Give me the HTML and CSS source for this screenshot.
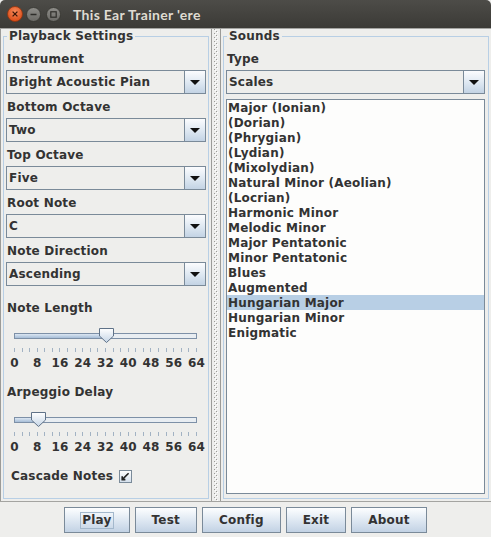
FILE: index.html
```html
<!DOCTYPE html>
<html>
<head>
<meta charset="utf-8">
<title>This Ear Trainer 'ere</title>
<link rel="stylesheet" href="styles.css">
</head>
<body>
<div class="titlebar">
  <svg class="wbtn close" width="16" height="16" viewBox="0 0 16 16">
    <defs><radialGradient id="cg" cx="50%" cy="35%" r="65%"><stop offset="0" stop-color="#f6895a"/><stop offset="1" stop-color="#dc4b16"/></radialGradient></defs>
    <circle cx="8" cy="8" r="7.5" fill="url(#cg)" stroke="#8e3510" stroke-width="0.8"/>
    <path d="M5.6 5.6 L10.4 10.4 M10.4 5.6 L5.6 10.4" stroke="#3b1608" stroke-width="1.3"/>
  </svg>
  <svg class="wbtn min" width="15" height="15" viewBox="0 0 15 15">
    <defs><linearGradient id="gg" x1="0" y1="0" x2="0" y2="1"><stop offset="0" stop-color="#8f8e8a"/><stop offset="1" stop-color="#6a6965"/></linearGradient></defs>
    <circle cx="7.5" cy="7.5" r="7" fill="url(#gg)" stroke="#34332f" stroke-width="0.8"/>
    <path d="M4.5 7.5 H10.5" stroke="#2e2d2a" stroke-width="1.5"/>
  </svg>
  <svg class="wbtn max" width="15" height="15" viewBox="0 0 15 15">
    <circle cx="7.5" cy="7.5" r="7" fill="url(#gg)" stroke="#34332f" stroke-width="0.8"/>
    <rect x="4.8" y="4.8" width="5.4" height="5.4" fill="none" stroke="#2e2d2a" stroke-width="1.2"/>
  </svg>
  <div class="title">This Ear Trainer 'ere</div>
</div>

<div class="split">
  <div class="pane left">
    <fieldset class="group">
      <legend>Playback Settings</legend>
      <div class="field-label">Instrument</div>
      <div class="combo"><span class="combo-text">Bright Acoustic Pian</span><span class="combo-btn"><svg width="10" height="5" viewBox="0 0 10 5"><polygon points="0,0 10,0 5,5" fill="#111"/></svg></span></div>
      <div class="field-label">Bottom Octave</div>
      <div class="combo"><span class="combo-text">Two</span><span class="combo-btn"><svg width="10" height="5" viewBox="0 0 10 5"><polygon points="0,0 10,0 5,5" fill="#111"/></svg></span></div>
      <div class="field-label">Top Octave</div>
      <div class="combo"><span class="combo-text">Five</span><span class="combo-btn"><svg width="10" height="5" viewBox="0 0 10 5"><polygon points="0,0 10,0 5,5" fill="#111"/></svg></span></div>
      <div class="field-label">Root Note</div>
      <div class="combo"><span class="combo-text">C</span><span class="combo-btn"><svg width="10" height="5" viewBox="0 0 10 5"><polygon points="0,0 10,0 5,5" fill="#111"/></svg></span></div>
      <div class="field-label">Note Direction</div>
      <div class="combo"><span class="combo-text">Ascending</span><span class="combo-btn"><svg width="10" height="5" viewBox="0 0 10 5"><polygon points="0,0 10,0 5,5" fill="#111"/></svg></span></div>

      <div class="field-label slider-label">Note Length</div>
      <div class="slider">
        <div class="track">
          <div class="fill" style="width:50%"></div>
          <svg class="thumb" style="left:50%" width="15" height="15" viewBox="0 0 15 15">
            <defs><linearGradient id="tg" x1="0" y1="0" x2="0" y2="1"><stop offset="0" stop-color="#ffffff"/><stop offset="1" stop-color="#c5d5e6"/></linearGradient></defs>
            <path d="M0.5 0.5 H14.5 V8 L7.5 14.5 L0.5 8 Z" fill="url(#tg)" stroke="#5f7288"/>
          </svg>
        </div>
        <div class="ticks"><i></i><i></i><i></i><i></i><i></i><i></i><i></i><i></i><i></i><i></i><i></i><i></i><i></i><i></i><i></i><i></i><i></i><i></i><i></i><i></i><i></i><i></i><i></i><i></i><i></i></div>
        <div class="nums"><span>0</span><span>8</span><span>16</span><span>24</span><span>32</span><span>40</span><span>48</span><span>56</span><span>64</span></div>
      </div>

      <div class="field-label slider-label">Arpeggio Delay</div>
      <div class="slider">
        <div class="track">
          <div class="fill" style="width:12.5%"></div>
          <svg class="thumb" style="left:12.5%" width="15" height="15" viewBox="0 0 15 15">
            <path d="M0.5 0.5 H14.5 V8 L7.5 14.5 L0.5 8 Z" fill="url(#tg)" stroke="#5f7288"/>
          </svg>
        </div>
        <div class="ticks"><i></i><i></i><i></i><i></i><i></i><i></i><i></i><i></i><i></i><i></i><i></i><i></i><i></i><i></i><i></i><i></i><i></i><i></i><i></i><i></i><i></i><i></i><i></i><i></i><i></i></div>
        <div class="nums"><span>0</span><span>8</span><span>16</span><span>24</span><span>32</span><span>40</span><span>48</span><span>56</span><span>64</span></div>
      </div>

      <div class="check-row">
        <span>Cascade Notes</span>
        <svg class="checkbox" width="13" height="13" viewBox="0 0 13 13">
          <defs><linearGradient id="kg" x1="0" y1="0" x2="0" y2="1"><stop offset="0" stop-color="#ffffff"/><stop offset="1" stop-color="#d3dfec"/></linearGradient></defs>
          <rect x="0.5" y="0.5" width="12" height="12" fill="url(#kg)" stroke="#7a8a99"/>
          <path d="M3.2 6.2 L3.2 9.6 L6.4 9.6 M3.4 9.4 L9.6 3.3" stroke="#222" stroke-width="1.6" fill="none"/>
        </svg>
      </div>
    </fieldset>
  </div>

  <div class="divider">
    <svg width="4" height="472">
      <defs><pattern id="bump" width="4" height="4" patternUnits="userSpaceOnUse">
        <rect x="0" y="0" width="1" height="1" fill="#9a9a96"/>
        <rect x="2" y="2" width="1" height="1" fill="#9a9a96"/>
        <rect x="1" y="1" width="1" height="1" fill="#ffffff"/>
        <rect x="3" y="3" width="1" height="1" fill="#ffffff"/>
      </pattern></defs>
      <rect width="4" height="472" fill="url(#bump)"/>
    </svg>
  </div>

  <div class="pane right">
    <fieldset class="group sounds">
      <legend>Sounds</legend>
      <div class="field-label">Type</div>
      <div class="combo"><span class="combo-text">Scales</span><span class="combo-btn"><svg width="10" height="5" viewBox="0 0 10 5"><polygon points="0,0 10,0 5,5" fill="#111"/></svg></span></div>
      <ul class="list">
        <li>Major (Ionian)</li>
        <li>(Dorian)</li>
        <li>(Phrygian)</li>
        <li>(Lydian)</li>
        <li>(Mixolydian)</li>
        <li>Natural Minor (Aeolian)</li>
        <li>(Locrian)</li>
        <li>Harmonic Minor</li>
        <li>Melodic Minor</li>
        <li>Major Pentatonic</li>
        <li>Minor Pentatonic</li>
        <li>Blues</li>
        <li>Augmented</li>
        <li class="selected">Hungarian Major</li>
        <li>Hungarian Minor</li>
        <li>Enigmatic</li>
      </ul>
    </fieldset>
  </div>
</div>

<div class="buttons">
  <button class="btn"><span class="focus">Play</span></button>
  <button class="btn">Test</button>
  <button class="btn">Config</button>
  <button class="btn">Exit</button>
  <button class="btn">About</button>
</div>
</body>
</html>
```

FILE: styles.css
```css
html, body {
  margin: 0;
  padding: 0;
}

body {
  width: 491px;
  height: 537px;
  overflow: hidden;
  background: #eeeeec;
  font: bold 12px "DejaVu Sans", sans-serif;
  letter-spacing: 0.2px;
  color: #333333;
}

/* ---- title bar ---- */
.titlebar {
  height: 28px;
  display: flex;
  align-items: center;
  background: linear-gradient(#4d4c48, #3b3a36);
  border-radius: 5px 5px 0 0;
}

.wbtn {
  display: block;
  flex: none;
}

.wbtn.close {
  margin-left: 7px;
}

.wbtn.min {
  margin-left: 3px;
}

.wbtn.max {
  margin-left: 5px;
}

.title {
  margin-left: 12px;
  font: bold 14px "Lato", "DejaVu Sans", sans-serif;
  letter-spacing: 0.3px;
  color: #dfdbd2;
}

/* ---- split pane ---- */
.split {
  display: flex;
  height: 472px;
  border-top: 1px solid #a4a4a1;
  border-bottom: 1px solid #a4a4a1;
}

.pane {
  box-sizing: border-box;
  display: flex;
  flex-direction: column;
  padding: 0 2px 2px 2px;
}

.pane.left {
  width: 212px;
  border-left: 1px solid #9b9b98;
  border-right: 1px solid #9b9b98;
}

.pane.right {
  flex: 1;
  border-left: 1px solid #9b9b98;
}

.divider {
  width: 8px;
  flex: none;
  padding-left: 2px;
  box-sizing: border-box;
}

.divider svg {
  display: block;
}

/* ---- titled group ---- */
.group {
  flex: 1;
  min-width: 0;
  margin: 0;
  border: 1px solid #b8cfe5;
  padding: 2px 2px 0 2px;
}

.group.sounds {
  padding-right: 3px;
}

.group legend {
  margin-left: 1px;
  padding: 0 2px;
  line-height: 15px;
  font-size: 12px;
  color: #333333;
}

.field-label {
  height: 24px;
  line-height: 26px;
  padding-left: 1px;
  white-space: nowrap;
}

/* ---- combo box ---- */
.combo {
  display: flex;
  height: 24px;
  box-sizing: border-box;
  border: 1px solid #7a8a99;
  background: #eeeeec;
}

.combo-text {
  flex: 1;
  min-width: 0;
  overflow: hidden;
  white-space: nowrap;
  padding-left: 2px;
  line-height: 23px;
}

.combo-btn {
  width: 20px;
  flex: none;
  display: flex;
  align-items: center;
  justify-content: center;
  border-left: 1px solid #7a8a99;
  background: linear-gradient(#fbfcfe, #dde7f1 55%, #c3d3e4);
}

.combo-btn svg {
  display: block;
}

/* ---- slider ---- */
.slider-label {
  margin-top: 9px;
}

.slider {
  padding: 0 9px 0 8px;
  margin-bottom: 3px;
}

.track {
  position: relative;
  height: 6px;
  box-sizing: border-box;
  margin-top: 14px;
  border: 1px solid #7d90a7;
  background: #e8edf2;
}

.track .fill {
  height: 100%;
  background: linear-gradient(#dbe6f2, #a6bdd7);
}

.thumb {
  position: absolute;
  top: -6px;
  margin-left: -7px;
  display: block;
}

.ticks {
  display: flex;
  justify-content: space-between;
  height: 4px;
  margin-top: 9px;
}

.ticks i {
  width: 1px;
  background: #a2b2c3;
}

.nums {
  display: flex;
  justify-content: space-between;
  height: 14px;
  line-height: 14px;
  margin-top: 4px;
}

.nums span {
  width: 1px;
  display: flex;
  justify-content: center;
  white-space: nowrap;
}

/* ---- checkbox ---- */
.check-row {
  display: flex;
  align-items: center;
  gap: 6px;
  height: 24px;
  margin-top: 10px;
  padding-left: 5px;
}

.checkbox {
  display: block;
  flex: none;
}

/* ---- list ---- */
.list {
  list-style: none;
  margin: 5px 0 0 0;
  padding: 0;
  height: 395px;
  box-sizing: border-box;
  border: 1px solid #7a8a99;
  background: #fdfdfc;
}

.list li {
  height: 15px;
  line-height: 17px;
  padding-left: 1px;
  white-space: nowrap;
}

.list li.selected {
  background: #b8cfe5;
}

/* ---- buttons ---- */
.buttons {
  display: flex;
  justify-content: center;
  gap: 5px;
  padding-top: 5px;
}

.btn {
  height: 26px;
  box-sizing: border-box;
  margin: 0;
  padding: 0 16px;
  border: 1px solid #7a8a99;
  background: linear-gradient(#fdfeff, #dce6f1 55%, #c2d2e4);
  font: bold 12px "DejaVu Sans", sans-serif;
  letter-spacing: 0.2px;
  color: #333333;
}

.btn .focus {
  display: inline-block;
  padding: 0 1px;
  line-height: 15px;
  outline: 1px solid #a3b8cc;
}
```
